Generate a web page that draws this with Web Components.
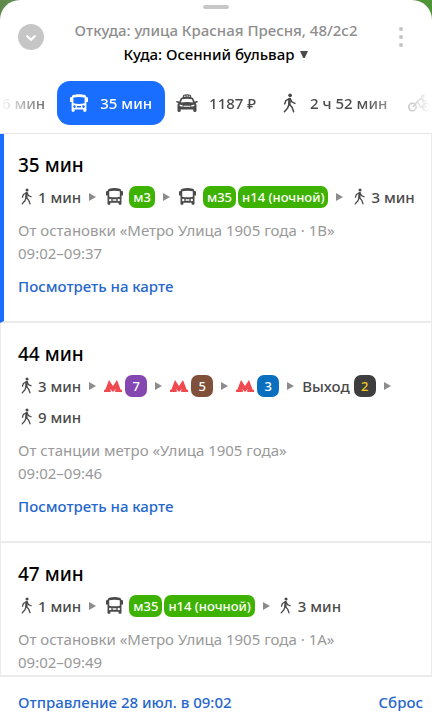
<!DOCTYPE html>
<html lang="ru">
<head>
<meta charset="utf-8">
<meta name="viewport" content="width=device-width, initial-scale=1">
<title>Маршруты</title>
<style>
    body {
        margin: 0;
        font-family: "Noto Sans", "Open Sans", sans-serif;
        font-weight: 500;
        color: #4a4a4a;
        background: linear-gradient(90deg, #5d8a4c, #87a878 30%, #6f9a5c 70%, #4f9438);
    }
</style>
</head>
<body>
<route-sheet>
    <sheet-header slot="header">
        <span slot="from">Откуда: улица Красная Пресня, 48/2с2</span>
        <span slot="to">Куда: Осенний бульвар</span>
    </sheet-header>

    <mode-tabs slot="tabs">
        <mode-tab>6 мин</mode-tab>
        <mode-tab icon="bus" active>35 мин</mode-tab>
        <mode-tab icon="taxi">1187 ₽</mode-tab>
        <mode-tab icon="walk">2 ч 52 мин</mode-tab>
        <mode-tab icon="bike"></mode-tab>
    </mode-tabs>

    <route-card active link>
        <span slot="title">35 мин</span>
        <route-step slot="steps" icon="walk">1 мин</route-step>
        <route-step slot="steps" icon="bus"><line-badge>м3</line-badge></route-step>
        <route-step slot="steps" icon="bus"><line-badge>м35</line-badge><line-badge>н14 (ночной)</line-badge></route-step>
        <route-step slot="steps" icon="walk" last>3 мин</route-step>
        <span slot="place">От остановки «Метро Улица 1905 года · 1В»</span>
        <span slot="time">09:02–09:37</span>
    </route-card>

    <route-card link>
        <span slot="title">44 мин</span>
        <route-step slot="steps" icon="walk">3 мин</route-step>
        <route-step slot="steps" icon="metro"><line-badge kind="violet">7</line-badge></route-step>
        <route-step slot="steps" icon="metro"><line-badge kind="brown">5</line-badge></route-step>
        <route-step slot="steps" icon="metro"><line-badge kind="blue">3</line-badge></route-step>
        <route-step slot="steps"><span>Выход</span><line-badge kind="exit">2</line-badge></route-step>
        <route-step slot="steps" icon="walk" last>9 мин</route-step>
        <span slot="place">От станции метро «Улица 1905 года»</span>
        <span slot="time">09:02–09:46</span>
    </route-card>

    <route-card>
        <span slot="title">47 мин</span>
        <route-step slot="steps" icon="walk">1 мин</route-step>
        <route-step slot="steps" icon="bus"><line-badge>м35</line-badge><line-badge>н14 (ночной)</line-badge></route-step>
        <route-step slot="steps" icon="walk" last>3 мин</route-step>
        <span slot="place">От остановки «Метро Улица 1905 года · 1А»</span>
        <span slot="time">09:02–09:49</span>
    </route-card>

    <sheet-footer slot="footer">
        <span slot="depart">Отправление 28 июл. в 09:02</span>
        <span slot="reset">Сброс</span>
    </sheet-footer>
</route-sheet>

<script>
// viewBox + shapes of every icon
const ICONS = {
    walk: ['0 0 12 18', `
        <circle cx="6.6" cy="1.9" r="1.7" fill="currentColor"/>
        <path d="M6.2 5 5.4 10.8M5.9 4.9 2.6 6.9 1.6 9.8M6.7 5.2 8.2 8 11 9.3M5.4 10.6 4.3 13.6 1.3 17M6 10.4 8.4 13 9.8 17" fill="none" stroke="currentColor" stroke-width="1.4" stroke-linecap="round" stroke-linejoin="round"/>
        <path d="M5 4.4h2.4L7 11H4.6z" fill="currentColor"/>`],
    bus: ['0 0 18 18', `
        <path fill="currentColor" fill-rule="evenodd" d="M3.6.8C6.5-.1 11.500-.1 14.400.8 15.500 1.100 16 2 16.200 3L18 3.600V8h-1.600v8.400c0 .9-.4 1.300-1.200 1.300h-.7c-.8 0-1.200-.4-1.200-1.300v-.8H4.700v.8c0 .9-.4 1.300-1.200 1.300h-.7c-.8 0-1.200-.4-1.200-1.300V8H0V3.600L1.800 3C2 2 2.500 1.100 3.600.8zM3.400 3.500v5.700c3.400.9 7.800.9 11.200 0V3.500c-3.400-.8-7.800-.8-11.200 0zM4.500 11.300a1.300 1.300 0 1 0 0 2.600 1.300 1.300 0 0 0 0-2.600zm9 0a1.300 1.300 0 1 0 0 2.600 1.300 1.300 0 0 0 0-2.600zM7 12v1.600h4V12z"/>`],
    taxi: ['0 0 22 18', `
        <path fill="currentColor" fill-rule="evenodd" d="M6.500 3.500 7.200 1C9.500.1 12.500.1 14.800 1l.7 2.500c1.200.2 1.800.8 2.200 1.700l1 2.500 1.500-.6c1-.2 1.700.4 1.700 1.200l-2.300.8c.7.8.9 1.700.9 2.900v4.500c0 .9-.4 1.400-1.200 1.400h-.8c-.8 0-1.200-.5-1.200-1.400v-.9H4.700v.9c0 .9-.4 1.400-1.200 1.400h-.8c-.8 0-1.200-.5-1.200-1.400V12c0-1.200.2-2.100.9-2.900L.1 8.300C.1 7.500.8 6.900 1.800 7.100l1.500.6 1-2.500c.4-.9 1-1.500 2.200-1.700zM6 5.300 4.900 8.400c3.700-.7 8.500-.7 12.200 0L16 5.300c-2.800-.7-7.200-.7-10 0zM3.800 10.400l-.2 1.700 3 .7.300-1.200zm14.400 0-3.100 1.200.3 1.200 3-.7zM7.500 11.800v1h7v-1zM8 1.700v1h1.500v-1zm2.500-.2v1H12v-1zm2.300.3v1h1.300v-1z"/>`],
    metro: ['0 0 18 12', `
        <path fill="#ef4a50" d="M5 0 9 6 13 0l3.700 9.800H18V12h-6.800V9.800h1L11.900 9 9 12 6.100 9l-.3.800h1V12H0V9.800h1.300z"/>`],
    bike: ['0 0 24 18', `
        <g fill="none" stroke="currentColor" stroke-width="1.500"><circle cx="4.500" cy="13" r="3.700"/><circle cx="18.500" cy="13" r="3.700"/><path d="m5 13 4.500-5.500L12.500 13 18 13 13.500 4.500M9.500 7.500 13.500 4l2.500 3h3"/></g><circle cx="15" cy="2" r="1.800" fill="currentColor"/>`],
    arrow: ['0 0 7 8', '<path d="M0 0 7 4 0 8z" fill="#8c8c8c"/>'],
    caret: ['0 0 8 7', '<path d="M0 0H8L4.800 7H3.200z" fill="#4a4a4a"/>'],
    chevron: ['0 0 26 26', '<circle cx="13" cy="13" r="13" fill="#c6c6c6"/><path d="m8.500 11.500 4.500 4.300 4.500-4.300" fill="none" stroke="#fff" stroke-width="2"/>'],
    dots: ['0 0 4 20', '<g fill="#c4c4c4"><circle cx="2" cy="2" r="2"/><circle cx="2" cy="10" r="2"/><circle cx="2" cy="18" r="2"/></g>']
};

function icon(name, width, height) {
    const [box, shapes] = ICONS[name];
    return `<svg viewBox="${box}" width="${width}" height="${height}" aria-hidden="true">${shapes}</svg>`;
}

class BaseElement extends HTMLElement {
    connectedCallback() {
        if (this.shadowRoot) return;
        const template = document.createElement('template');
        template.innerHTML = `
            <style>
                button { font: inherit; color: inherit; background: none; border: 0; padding: 0; margin: 0; cursor: pointer; }
                svg { display: block; flex: none; }
            </style>` + this.render();
        this.attachShadow({ mode: 'open' }).appendChild(template.content.cloneNode(true));
    }
}

class RouteSheet extends BaseElement {
    render() {
        return `
        <style>
            :host { display: flex; flex-direction: column; height: 100vh; overflow: hidden; background: #fff; border-radius: 20px 20px 0 0; }
            main { flex: 1; min-height: 0; overflow-y: auto; scrollbar-width: none; border-top: 1px solid #e6e6e6; border-bottom: 2px solid #ebebeb; }
        </style>
        <slot name="header"></slot>
        <slot name="tabs"></slot>
        <main><slot></slot></main>
        <slot name="footer"></slot>`;
    }
}

class SheetHeader extends BaseElement {
    render() {
        return `
        <style>
            :host { display: block; padding: 5px 18px 15px; }
            .handle { width: 26px; height: 4px; margin: 0 auto 9px; border-radius: 2px; background: #c8c8c8; }
            .bar { display: flex; align-items: flex-start; justify-content: space-between; }
            .collapse { margin-top: 6px; }
            .more { padding: 9px 11px; }
            .points { display: flex; flex-direction: column; align-items: center; font-size: 15px; line-height: 24px; }
            .from { color: #8e8e8e; }
            .to { display: flex; align-items: center; gap: 6px; color: #000; }
        </style>
        <div class="handle"></div>
        <div class="bar">
            <button class="collapse" aria-label="Свернуть">${icon('chevron', 26, 26)}</button>
            <div class="points">
                <button class="from"><slot name="from"></slot></button>
                <button class="to"><slot name="to"></slot>${icon('caret', 8, 7)}</button>
            </div>
            <button class="more" aria-label="Ещё">${icon('dots', 4, 20)}</button>
        </div>`;
    }
}

class ModeTabs extends BaseElement {
    render() {
        return `
        <style>
            :host {
                display: flex; overflow: hidden; padding: 0 0 8px 2px;
                -webkit-mask-image: linear-gradient(90deg, transparent, #000 56px, #000 calc(100% - 72px), transparent);
                mask-image: linear-gradient(90deg, transparent, #000 56px, #000 calc(100% - 72px), transparent);
            }
        </style>
        <slot></slot>`;
    }
}

class ModeTab extends BaseElement {
    render() {
        const widths = { bus: 18, taxi: 22, walk: 13, bike: 24 };
        const name = this.getAttribute('icon');
        const svg = name ? icon(name, widths[name], name === 'walk' ? 20 : 18) : '';
        return `
        <style>
            :host { display: block; flex: none; font-size: 15px; }
            button { display: flex; align-items: center; gap: 11px; height: 44px; padding: 0 11px; border-radius: 13px; white-space: nowrap; }
            :host(:not([icon])) button { padding: 0 12px 0 0; }
            :host([icon="walk"]) button { gap: 14px; padding: 0 10px 0 16px; }
            :host([active]) button { gap: 12px; padding: 0 13px; color: #fff; background: #196dff; }
        </style>
        <button>${svg}<slot></slot></button>`;
    }
}

class RouteCard extends BaseElement {
    render() {
        const link = this.hasAttribute('link') ? '<a href="#map">Посмотреть на карте</a>' : '';
        return `
        <style>
            :host { display: block; padding: 17px 8px 23px 17px; border: solid #ebebeb; border-width: 0 1px 2px; font-size: 15px; }
            :host([active]) { padding-left: 14px; border-left: 4px solid #196dff; }
            h2 { margin: 0 0 2px; font-size: 19px; line-height: 28px; font-weight: 500; color: #000; }
            .steps { display: flex; flex-wrap: wrap; column-gap: 8px; }
            p { margin: 7px 0 9px; display: flex; flex-direction: column; line-height: 23px; font-weight: 400; color: #999; }
            a { display: block; width: fit-content; line-height: 24px; color: #2667cc; text-decoration: none; }
        </style>
        <h2><slot name="title"></slot></h2>
        <div class="steps"><slot name="steps"></slot></div>
        <p><slot name="place"></slot><slot name="time"></slot></p>
        ${link}`;
    }
}

class RouteStep extends BaseElement {
    render() {
        const sizes = { walk: [11, 17], bus: [17, 17], metro: [18, 12] };
        const name = this.getAttribute('icon');
        const svg = name ? `<span class="icon">${icon(name, ...sizes[name])}</span>` : '';
        const arrow = this.hasAttribute('last') ? '' : icon('arrow', 7, 8);
        return `
        <style>
            :host { display: flex; align-items: center; gap: 8px; height: 31px; white-space: nowrap; }
            .icon { display: flex; justify-content: center; width: 20px; margin-right: 3px; }
            :host([icon="walk"]) .icon { width: 16px; margin-right: 2px; }
            :host([icon="metro"]) .icon { width: 18px; margin-right: 1px; }
            .content { display: flex; align-items: center; gap: 2px; }
            :host(:not([icon])) .content { gap: 4px; }
        </style>
        <span class="content">${svg}<slot></slot></span>${arrow}`;
    }
}

class LineBadge extends BaseElement {
    render() {
        return `
        <style>
            :host { display: block; box-sizing: border-box; min-width: 22px; padding: 0 4px; border-radius: 7px; font-size: 13px; line-height: 22px; text-align: center; color: #fff; background: #3eb200; }
            :host([kind="violet"]) { background: #8446b0; }
            :host([kind="brown"]) { background: #80503a; }
            :host([kind="blue"]) { background: #0a6fbf; }
            :host([kind="exit"]) { color: #f2cb1d; background: #3e3e3e; }
        </style>
        <slot></slot>`;
    }
}

class SheetFooter extends BaseElement {
    render() {
        return `
        <style>
            :host { display: flex; justify-content: space-between; padding: 13px 9px 4px 18px; font-size: 15px; line-height: 24px; color: #2667cc; }
        </style>
        <button><slot name="depart"></slot></button>
        <button><slot name="reset"></slot></button>`;
    }
}

customElements.define('route-sheet', RouteSheet);
customElements.define('sheet-header', SheetHeader);
customElements.define('mode-tabs', ModeTabs);
customElements.define('mode-tab', ModeTab);
customElements.define('route-card', RouteCard);
customElements.define('route-step', RouteStep);
customElements.define('line-badge', LineBadge);
customElements.define('sheet-footer', SheetFooter);
</script>
</body>
</html>
